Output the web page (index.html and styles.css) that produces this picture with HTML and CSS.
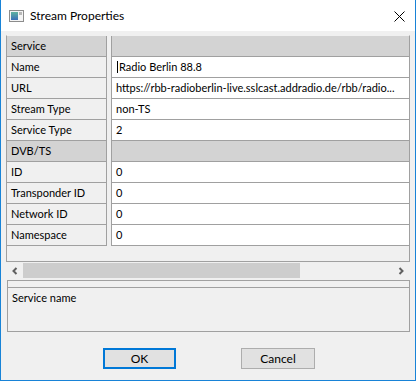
FILE: index.html
```html
<!DOCTYPE html>
<html lang="en">
<head>
    <meta charset="UTF-8">
    <title>Stream Properties</title>
    <link rel="stylesheet" href="styles.css">
</head>
<body>
    <div class="window">
        <div class="titlebar">
            <svg class="app-icon" width="15" height="12" viewBox="0 0 15 12">
                <defs>
                    <linearGradient id="screen" x1="0" y1="0" x2="0" y2="1">
                        <stop offset="0" stop-color="#5fb3a0"/>
                        <stop offset="1" stop-color="#3a6fb8"/>
                    </linearGradient>
                </defs>
                <rect x="0.5" y="0.5" width="14" height="11" fill="#f4f4f4" stroke="#8c8c8c"/>
                <rect x="2" y="2" width="7" height="8" fill="url(#screen)"/>
                <rect x="10" y="2" width="3" height="3" fill="#b8b8b8"/>
            </svg>
            <span class="title">Stream Properties</span>
            <svg class="close" width="11" height="11" viewBox="0 0 11 11">
                <path d="M0.5 0.5 L10.5 10.5 M10.5 0.5 L0.5 10.5" stroke="#000" stroke-width="1"/>
            </svg>
        </div>

        <div class="client">
            <div class="grid-frame">
                <div class="grid">
                    <div class="label category">Service</div>
                    <div class="splitter"></div>
                    <div class="value category"></div>

                    <div class="label">Name</div>
                    <div class="value"><span class="caret"></span>Radio Berlin 88.8</div>

                    <div class="label">URL</div>
                    <div class="value">https://rbb-radioberlin-live.sslcast.addradio.de/rbb/radio...</div>

                    <div class="label">Stream Type</div>
                    <div class="value">non-TS</div>

                    <div class="label">Service Type</div>
                    <div class="value">2</div>

                    <div class="label category">DVB/TS</div>
                    <div class="value category"></div>

                    <div class="label">ID</div>
                    <div class="value">0</div>

                    <div class="label">Transponder ID</div>
                    <div class="value">0</div>

                    <div class="label">Network ID</div>
                    <div class="value">0</div>

                    <div class="label">Namespace</div>
                    <div class="value">0</div>
                </div>
            </div>

            <div class="hscroll">
                <div class="arrow">
                    <svg width="8" height="8" viewBox="0 0 8 8"><path d="M5.5 1 L2.5 4 L5.5 7" fill="none" stroke="#606060" stroke-width="2"/></svg>
                </div>
                <div class="track"><div class="thumb"></div></div>
                <div class="arrow">
                    <svg width="8" height="8" viewBox="0 0 8 8"><path d="M2.5 1 L5.5 4 L2.5 7" fill="none" stroke="#606060" stroke-width="2"/></svg>
                </div>
            </div>

            <div class="desc">
                <div class="desc-strip"></div>
                <div class="desc-body">Service name</div>
            </div>

            <div class="buttons">
                <button class="btn default">OK</button>
                <button class="btn cancel">Cancel</button>
            </div>
        </div>
    </div>
</body>
</html>
```

FILE: styles.css
```css
body {
    margin: 0;
    padding: 0;
    font-family: 'Lato', 'Liberation Sans', sans-serif;
    font-size: 11px;
    color: #000;
    background: #f0f0f0;
}
.window {
    width: 416px;
    height: 381px;
    box-sizing: border-box;
    border: 1px solid #1883d7;
    border-top: none;
    display: flex;
    flex-direction: column;
    background: #f0f0f0;
}
.titlebar {
    height: 31px;
    flex: none;
    background: #fff;
    display: flex;
    align-items: center;
}
.app-icon {
    margin-left: 8px;
    margin-top: 1px;
}
.title {
    margin-left: 6px;
    flex: 1;
    font-size: 12px;
}
.close {
    margin-right: 10px;
    margin-top: 1px;
}
.client {
    flex: 1;
    padding: 4px 5px 0 5px;
    display: flex;
    flex-direction: column;
}

/* property grid */
.grid-frame {
    height: 227px;
    box-sizing: border-box;
    border: 1px solid #a0a0a0;
    border-top-color: #f0f0f0;
}
.grid {
    display: grid;
    grid-template-columns: 99px 6px 1fr;
    grid-auto-rows: 21px;
}
.label, .value {
    box-sizing: border-box;
    border-bottom: 1px solid #a0a0a0;
    padding: 0 4px;
    line-height: 20px;
    white-space: nowrap;
    overflow: hidden;
}
.label {
    grid-column: 1;
    background: #f0f0f0;
}
.value {
    grid-column: 3;
    background: #fff;
    padding-right: 2px;
}
.label.category, .value.category {
    background: #d3d3d3;
}
.splitter {
    grid-column: 2;
    grid-row: 1 / span 10;
    box-sizing: border-box;
    border-left: 1px solid #a0a0a0;
    border-right: 1px solid #a0a0a0;
    background: #f0f0f0;
}
.caret {
    display: inline-block;
    width: 1px;
    height: 12px;
    background: #000;
    vertical-align: -2px;
    margin: 0 1px 0 1px;
}

/* horizontal scrollbar */
.hscroll {
    height: 17px;
    margin: 0 1px;
    display: flex;
}
.arrow {
    width: 16px;
    display: flex;
    align-items: center;
    justify-content: center;
}
.track {
    flex: 1;
    padding: 1px 0;
}
.thumb {
    width: 277px;
    height: 15px;
    background: #cdcdcd;
}

/* description panel */
.desc {
    margin-top: 1px;
    height: 52px;
    box-sizing: border-box;
    border: 1px solid #a0a0a0;
    margin-left: 1px;
}
.desc-strip {
    height: 6px;
    border-bottom: 1px solid #a0a0a0;
}
.desc-body {
    padding: 2px 4px;
    line-height: 15px;
}

/* dialog buttons */
.buttons {
    display: flex;
    justify-content: center;
    gap: 65px;
    padding-left: 2px;
    margin-top: 16px;
}
.btn {
    height: 21px;
    box-sizing: border-box;
    background: #e1e1e1;
    font-family: 'Lato', 'Liberation Sans', sans-serif;
    font-size: 12px;
    color: #000;
    padding: 0;
}
.default {
    width: 73px;
    border: 2px solid #0078d7;
}
.cancel {
    width: 74px;
    border: 1px solid #adadad;
}
```
